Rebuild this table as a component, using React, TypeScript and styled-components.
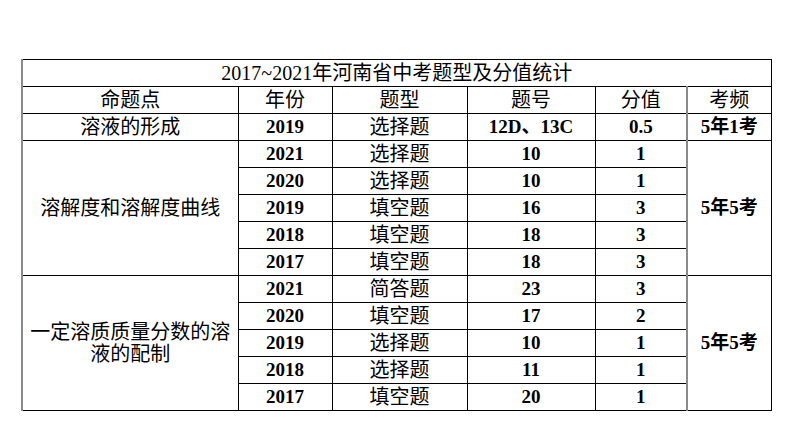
import React from "react"
import styled, { createGlobalStyle } from "styled-components"

const Global = createGlobalStyle`
    html, body {
        margin: 0;
        padding: 0;
        background: #fff;
    }
`

const Page = styled.div`
    width: 794px;
    height: 447px;
    padding: 59px 0 0 21px;
    box-sizing: border-box;
    background: #fff;
    font-family: "Liberation Serif", "Noto Sans CJK SC", serif;
    color: #000;
`

const Table = styled.table`
    border-collapse: collapse;
    table-layout: fixed;
    width: 749px;
`

const TitleCell = styled.td`
    height: 26px;
    padding: 0;
    border: 1px solid #000;
    border-left: 2px solid #8a8a8a;
    text-align: center;
    vertical-align: middle;
    font-size: 20px;
    line-height: 22px;
    font-family: "Liberation Serif", "Noto Sans CJK SC", serif;
`

const Cell = styled.td<{ $bold?: boolean; $first?: boolean; $grayRight?: boolean; $wrap?: boolean }>`
    height: 26px;
    padding: ${p => (p.$wrap ? "0 4px" : "0")};
    border: 1px solid #000;
    ${p => p.$first && "border-left: 2px solid #8a8a8a;"}
    ${p => p.$grayRight && "border-right: 2px solid #8a8a8a;"}
    text-align: center;
    vertical-align: middle;
    font-size: ${p => (p.$bold ? "19px" : "20px")};
    font-weight: ${p => (p.$bold ? 700 : 400)};
    line-height: 22px;
    white-space: ${p => (p.$wrap ? "normal" : "nowrap")};
`

type Row = { year: string; type: string; no: string; score: string }

const solubility: Row[] = [
    { year: "2021", type: "选择题", no: "10", score: "1" },
    { year: "2020", type: "选择题", no: "10", score: "1" },
    { year: "2019", type: "填空题", no: "16", score: "3" },
    { year: "2018", type: "填空题", no: "18", score: "3" },
    { year: "2017", type: "填空题", no: "18", score: "3" },
]

const preparation: Row[] = [
    { year: "2021", type: "简答题", no: "23", score: "3" },
    { year: "2020", type: "填空题", no: "17", score: "2" },
    { year: "2019", type: "选择题", no: "10", score: "1" },
    { year: "2018", type: "选择题", no: "11", score: "1" },
    { year: "2017", type: "填空题", no: "20", score: "1" },
]

const Group = ({ topic, rows, freq }: { topic: string; rows: Row[]; freq: string }) => (
    <>
        {rows.map((r, i) => (
            <tr key={r.year + i}>
                {i === 0 && (
                    <Cell $first $wrap rowSpan={rows.length}>{topic}</Cell>
                )}
                <Cell $bold>{r.year}</Cell>
                <Cell>{r.type}</Cell>
                <Cell $bold>{r.no}</Cell>
                <Cell $bold $grayRight>{r.score}</Cell>
                {i === 0 && (
                    <Cell $bold rowSpan={rows.length}>{freq}</Cell>
                )}
            </tr>
        ))}
    </>
)

const App = () => (
    <Page>
        <Global />
        <Table>
            <colgroup>
                <col style={{ width: 216 }} />
                <col style={{ width: 94 }} />
                <col style={{ width: 135 }} />
                <col style={{ width: 128 }} />
                <col style={{ width: 92 }} />
                <col style={{ width: 84 }} />
            </colgroup>
            <tbody>
                <tr>
                    <TitleCell colSpan={6}>2017~2021年河南省中考题型及分值统计</TitleCell>
                </tr>
                <tr>
                    <Cell $first>命题点</Cell>
                    <Cell>年份</Cell>
                    <Cell>题型</Cell>
                    <Cell>题号</Cell>
                    <Cell $grayRight>分值</Cell>
                    <Cell>考频</Cell>
                </tr>
                <tr>
                    <Cell $first>溶液的形成</Cell>
                    <Cell $bold>2019</Cell>
                    <Cell>选择题</Cell>
                    <Cell $bold>12D、13C</Cell>
                    <Cell $bold $grayRight>0.5</Cell>
                    <Cell $bold>5年1考</Cell>
                </tr>
                <Group topic="溶解度和溶解度曲线" rows={solubility} freq="5年5考" />
                <Group topic="一定溶质质量分数的溶液的配制" rows={preparation} freq="5年5考" />
            </tbody>
        </Table>
    </Page>
)

export default App
